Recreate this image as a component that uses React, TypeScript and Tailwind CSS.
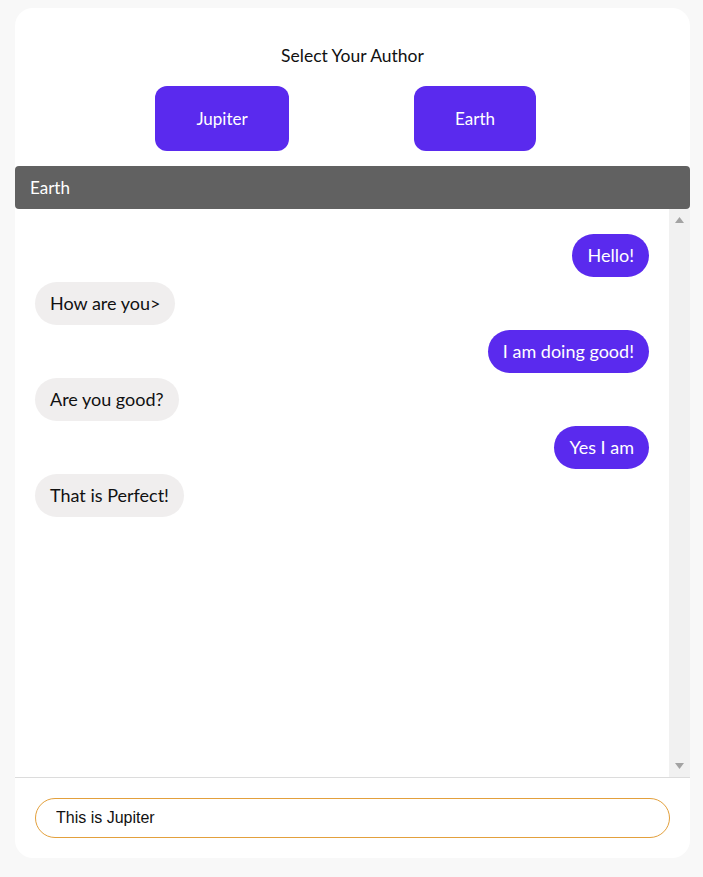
import type { JSX } from 'react'

type Msg = { id: number; text: string; mine: boolean }

const messages: Msg[] = [
  { id: 1, text: 'Hello!', mine: true },
  { id: 2, text: 'How are you>', mine: false },
  { id: 3, text: 'I am doing good!', mine: true },
  { id: 4, text: 'Are you good?', mine: false },
  { id: 5, text: 'Yes I am', mine: true },
  { id: 6, text: 'That is Perfect!', mine: false },
]

const font = { fontFamily: '"Segoe UI", Lato, "Open Sans", sans-serif' }

function Bubble({ msg }: { msg: Msg }): JSX.Element {
  return (
    <div className={msg.mine ? 'flex justify-end' : 'flex justify-start'}>
      <div
        className={
          msg.mine
            ? 'flex h-[43px] items-center rounded-full bg-[#5a2aee] px-[15px] text-[18px] text-white'
            : 'flex h-[43px] items-center rounded-full bg-[#f0eeee] px-[15px] text-[18px] text-[#111]'
        }
      >
        {msg.text}
      </div>
    </div>
  )
}

function Scrollbar(): JSX.Element {
  return (
    <div className="flex w-[21px] flex-col items-center justify-between bg-[#f1f1f1] py-[8px]">
      <svg width="9" height="6" viewBox="0 0 9 6">
        <path d="M4.5 0L9 6H0z" fill="#a3a3a3" />
      </svg>
      <svg width="9" height="6" viewBox="0 0 9 6">
        <path d="M0 0h9L4.5 6z" fill="#a3a3a3" />
      </svg>
    </div>
  )
}

export default function App(): JSX.Element {
  return (
    <div className="min-h-[877px] bg-[#f8f8f8] pt-2" style={font}>
      <div className="ml-[15px] flex h-[850px] w-[675px] flex-col rounded-[18px] bg-white">
        <div className="pt-[36px] text-center text-[17.5px] leading-[24px] text-[#111]">
          Select Your Author
        </div>
        <div className="mt-[18px] flex gap-[125px] pl-[140px]">
          <button className="h-[65px] w-[134px] rounded-[12px] bg-[#5a2aee] text-[17px] text-white">
            Jupiter
          </button>
          <button className="h-[65px] w-[122px] rounded-[12px] bg-[#5a2aee] text-[17px] text-white">
            Earth
          </button>
        </div>
        <div className="mt-[15px] flex h-[43px] items-center rounded-[4px] bg-[#616161] pl-[15px] text-[17px] text-white">
          Earth
        </div>
        <div className="flex h-[569px] border-b border-[#dcdcdc]">
          <div className="flex flex-1 flex-col gap-[5px] pl-[20px] pr-[20px] pt-[25px]">
            {messages.map((m) => (
              <Bubble key={m.id} msg={m} />
            ))}
          </div>
          <Scrollbar />
        </div>
        <div className="px-[20px] pt-[20px]">
          <input
            className="h-[40px] w-full rounded-full border border-[#e3a03c] pl-[20px] text-[16px] text-[#111] outline-none"
            style={{ fontFamily: '"Liberation Sans", Arial, sans-serif' }}
            defaultValue="This is Jupiter"
          />
        </div>
      </div>
    </div>
  )
}
